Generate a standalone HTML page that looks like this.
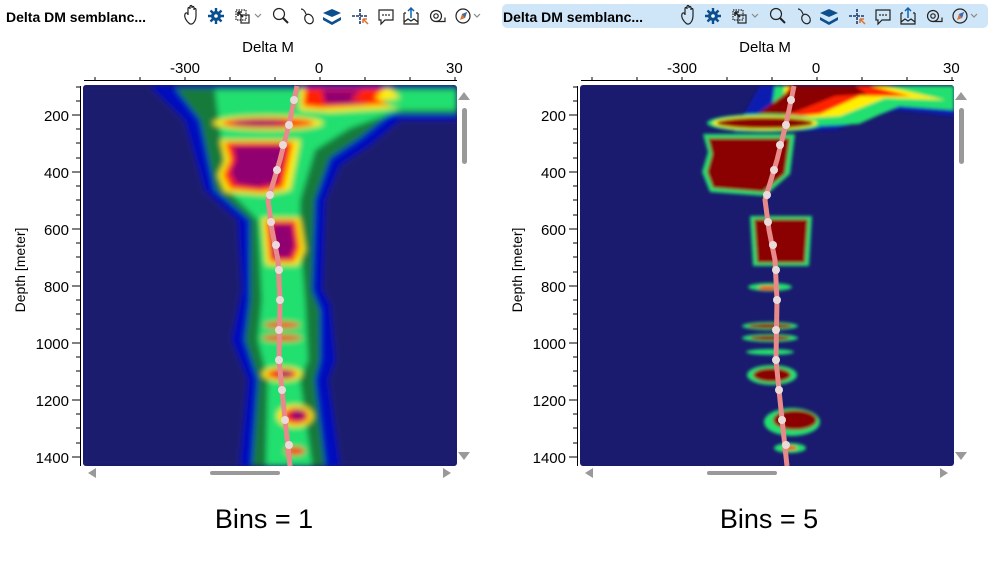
<!DOCTYPE html>
<html><head><meta charset="utf-8"><style>
body{margin:0;width:993px;height:563px;background:#fff;overflow:hidden;font-family:"Liberation Sans",sans-serif}
</style></head><body>
<svg width="993" height="563" viewBox="0 0 993 563" xmlns="http://www.w3.org/2000/svg" font-family="Liberation Sans, sans-serif">
<defs>
<filter id="bl" x="-50%" y="-50%" width="200%" height="200%"><feGaussianBlur stdDeviation="3"/></filter>
<filter id="bs" x="-50%" y="-50%" width="200%" height="200%"><feGaussianBlur stdDeviation="1.5"/></filter>
<clipPath id="c1"><rect x="83" y="85" width="374" height="381" rx="3"/></clipPath>
<clipPath id="c2"><rect x="580" y="85" width="374" height="381" rx="3"/></clipPath>
<g id="tb">
<text x="6" y="22" font-size="14" font-weight="bold" fill="#000">Delta DM semblanc...</text>
<g stroke="#222" fill="none" stroke-width="1.2">
<path d="M190 24c-4-3-6-7-5-10 1-2 3-1 3 1v-6c0-2 2-2 2 0v-2c0-2 2-2 2 0v1c0-2 2-2 2 0v2c0-2 2-2 2 0v6c0 4-2 7-4 8z"/>
<rect x="236" y="10" width="10" height="10" stroke-dasharray="1.5 1"/><rect x="241" y="15" width="8" height="8"/><path d="M238 12l5 5M238 12h4M238 12v4" stroke-width="1.6"/><path d="M255 14l3 3 3-3" stroke="#888"/>
<circle cx="279" cy="14" r="5.5"/><path d="M283 18l5 5" stroke-width="2"/>
<path d="M301 9c2 0 4 2 5 5"/><ellipse cx="309" cy="19" rx="4" ry="5" transform="rotate(-30 309 19)"/>
<path d="M352 16h16M360 9v16" stroke="#1a3a6a" stroke-width="1.6" stroke-dasharray="3 1"/>
<path d="M379 10h14v10h-8l-4 4v-4h-2z"/>
<path d="M404 13h2M416 13h2M404 13v11h14v-11M404 22l4-3 3 2 3-2 4 3"/><path d="M411 18v-10M408 11l3-3 3 3" stroke="#1060b0" stroke-width="1.5"/>
<circle cx="436" cy="16" r="5.5"/><circle cx="436" cy="16" r="2.2"/><path d="M436 21.5h9v-4"/>
<circle cx="463" cy="16" r="7"/><path d="M474 14l3 3 3-3" stroke="#888"/>
</g>
<path d="M460 20l2-6 5-2-2 6z" fill="#e07030"/><path d="M462 14l5-2-2 6z" fill="#3a6ab0"/>
<circle cx="216" cy="16" r="5" fill="#0b4f8f"/>
<path d="M216 8v16M208 16h16M210.5 10.5l11 11M221.5 10.5l-11 11" stroke="#0b4f8f" stroke-width="2.4"/>
<circle cx="216" cy="16" r="1.8" fill="#fff"/>
<path d="M323 13l9-4 9 4-9 4z" fill="#0b4f8f"/><path d="M323 17l9 5 9-5v3l-9 5-9-5z" fill="#0b4f8f"/>
<path d="M363 19l5 5M363 19h4M363 19v4" stroke="#e07030" stroke-width="1.5"/>
<g fill="#222"><circle cx="383" cy="15" r="0.9"/><circle cx="386" cy="15" r="0.9"/><circle cx="389" cy="15" r="0.9"/></g>
</g>
<g id="ax">
<text x="268" y="52" font-size="15" text-anchor="middle">Delta M</text>
<text x="185" y="73" font-size="15" text-anchor="middle">-300</text>
<text x="319" y="73" font-size="15" text-anchor="middle">0</text>
<text x="446" y="73" font-size="15">30</text>
<path d="M84 80.5H457M95 80v-3M140 80v-3M185 80v-3M230 80v-3M275 80v-3M320 80v-3M365 80v-3M410 80v-3M455 80v-3" stroke="#000" fill="none"/>
<path d="M80.5 86V466M72 115h8M72 172h8M72 229h8M72 286h8M72 343h8M72 400h8M72 457h8M76 87h4M76 101h4M76 129h4M76 143h4M76 158h4M76 186h4M76 200h4M76 215h4M76 243h4M76 257h4M76 272h4M76 300h4M76 314h4M76 329h4M76 357h4M76 371h4M76 386h4M76 414h4M76 428h4M76 443h4" stroke="#000" fill="none"/>
<g font-size="15" text-anchor="end">
<text x="69" y="121">200</text><text x="69" y="178">400</text><text x="69" y="235">600</text><text x="69" y="292">800</text><text x="69" y="349">1000</text><text x="69" y="406">1200</text><text x="69" y="463">1400</text></g>
<text transform="translate(25 270) rotate(-90)" font-size="14" text-anchor="middle">Depth [meter]</text>
<path d="M458 100l6-8 6 8z M458 452l6 8 6-8z M96 468l-8 5 8 5z M443 468l8 5-8 5z" fill="#999"/>
<rect x="462" y="108" width="5" height="56" rx="2.5" fill="#999"/>
<rect x="210" y="471" width="70" height="4" rx="2" fill="#999"/>
</g>
</defs>

<!-- left panel -->
<use href="#tb"/>
<use href="#ax"/>
<rect x="83" y="85" width="374" height="381" rx="3" fill="#1a1a6e"/>
<g clip-path="url(#c1)"><g filter="url(#bl)">
<rect x="83" y="85" width="374" height="381" fill="#1a1a6e"/>
<path d="M150 86H457V120H400L370 145 340 165 325 200 322 290 330 305 335 360 328 380 340 466H240L248 380 232 340 240 300 242 290 238 220 205 190 185 120z" fill="#0008c0"/>
<path d="M175 88H457V114H390L360 138 330 158 315 200 312 290 320 310 320 360 315 380 325 466H252L258 380 245 340 250 300 250 220 215 190 200 120z" fill="#127a3a"/>
<path d="M215 90H457V110H400L350 128 315 150 300 200 300 240 305 300 308 360 300 380 312 466H266L268 380 258 340 262 300 258 220 228 190 220 130z" fill="#20e070"/>
<path d="M300 88H390L400 98 370 102 400 108 330 112 300 110z" fill="#ffee00"/>
<path d="M305 88H385L375 98 390 104 320 108 303 106z" fill="#ff2000"/>
<path d="M322 90H362L350 100 370 104 325 104z" fill="#900070"/>
<ellipse cx="268" cy="123" rx="55" ry="7" fill="#ffee00"/>
<ellipse cx="268" cy="123" rx="46" ry="5" fill="#ff2000"/>
<ellipse cx="260" cy="123" rx="28" ry="3" fill="#900070"/>
<path d="M220 140H300L290 190 265 195 225 192 218 175 225 160z" fill="#ffee00"/>
<path d="M225 142H293L283 188 262 192 230 189 223 175 230 160z" fill="#ff2000"/>
<path d="M233 146H285L277 183 258 187 236 184 230 172 236 160z" fill="#900070"/>
<path d="M262 218H300L305 250 298 265H266z" fill="#ffee00"/>
<path d="M266 220H296L300 248 294 262H270z" fill="#ff2000"/>
<path d="M272 224H292L295 246 290 258H274z" fill="#900070"/>
<ellipse cx="282" cy="325" rx="18" ry="3" fill="#ff2000"/>
<ellipse cx="282" cy="338" rx="20" ry="3" fill="#ff2000"/>
<ellipse cx="282" cy="374" rx="20" ry="7" fill="#ffee00"/><ellipse cx="282" cy="374" rx="15" ry="5" fill="#ff2000"/><ellipse cx="285" cy="374" rx="8" ry="3" fill="#900070"/>
<ellipse cx="295" cy="416" rx="18" ry="11" fill="#ffee00"/><ellipse cx="296" cy="416" rx="13" ry="8" fill="#ff2000"/><ellipse cx="298" cy="415" rx="8" ry="5" fill="#900070"/>
<ellipse cx="295" cy="451" rx="10" ry="4" fill="#ff2000"/>
</g>
<path d="M297 86L290 120 280 160 268 200 272 230 278 260 280 300 279 360 283 400 290 466" stroke="#e88a8a" stroke-width="5" fill="none"/>
<g fill="#eadada"><circle cx="294" cy="100" r="4"/><circle cx="289" cy="125" r="4"/><circle cx="283" cy="145" r="4"/><circle cx="277" cy="170" r="4"/><circle cx="270" cy="195" r="4"/><circle cx="271" cy="222" r="4"/><circle cx="276" cy="245" r="4"/><circle cx="279" cy="270" r="4"/><circle cx="280" cy="300" r="4"/><circle cx="279" cy="330" r="4"/><circle cx="279" cy="360" r="4"/><circle cx="282" cy="390" r="4"/><circle cx="285" cy="420" r="4"/><circle cx="289" cy="445" r="4"/></g>
</g>

<!-- right panel -->
<rect x="502" y="4" width="486" height="24" rx="5" fill="#cfe6f8"/>
<use href="#tb" x="497"/>
<use href="#ax" x="497"/>
<rect x="580" y="85" width="374" height="381" rx="3" fill="#1a1a6e"/>
<g clip-path="url(#c2)"><g filter="url(#bs)">
<path d="M760 86h194v30l-60 -6-60 20-100 2z" fill="#0a1fb0"/>
<path d="M775 86h179v24l-55-4-40 18-90 4z" fill="#22e070"/>
<path d="M785 86h100l60 14-60-2-45 18-60 4z" fill="#ffee00"/>
<path d="M790 86h80l40 10-50 0-40 18-50 5z" fill="#ff2000"/>
<path d="M795 86h60l12 8-32 2-40 16-45 8z" fill="#8b0000"/>
<ellipse cx="765" cy="123" rx="58" ry="9" fill="#22e070"/><ellipse cx="765" cy="123" rx="52" ry="7" fill="#ffee00"/><ellipse cx="765" cy="123" rx="48" ry="5.5" fill="#8b0000"/>
<path d="M703 134h92l-5 40-25 22-55-4-8-20 6-20z" fill="#22e070"/>
<path d="M708 138h82l-5 36-22 18-50-4-6-16 5-18z" fill="#8b0000"/>
<path d="M750 216h62l-3 50-56 0z" fill="#22e070"/>
<path d="M754 219h54l-3 44-48 0z" fill="#8b0000"/>
<ellipse cx="770" cy="287" rx="22" ry="4" fill="#22e070"/><ellipse cx="768" cy="288" rx="10" ry="2" fill="#ff2000"/>
<ellipse cx="770" cy="326" rx="28" ry="4" fill="#22e070"/><ellipse cx="770" cy="326" rx="22" ry="2.5" fill="#8b0000"/>
<ellipse cx="770" cy="338" rx="28" ry="4" fill="#22e070"/><ellipse cx="770" cy="338" rx="20" ry="2.5" fill="#8b0000"/>
<ellipse cx="770" cy="352" rx="24" ry="3" fill="#22e070"/>
<ellipse cx="772" cy="375" rx="25" ry="10" fill="#22e070"/><ellipse cx="772" cy="375" rx="19" ry="7" fill="#8b0000"/>
<ellipse cx="792" cy="422" rx="28" ry="14" fill="#22e070"/><ellipse cx="795" cy="420" rx="22" ry="10" fill="#8b0000"/>
<ellipse cx="790" cy="448" rx="16" ry="5" fill="#22e070"/><ellipse cx="790" cy="448" rx="7" ry="2" fill="#ff2000"/>
</g>
<path d="M794 86L787 120 777 160 765 200 769 230 775 260 777 300 776 360 780 400 787 466" stroke="#e88a8a" stroke-width="5" fill="none"/>
<g fill="#eadada"><circle cx="791" cy="100" r="4"/><circle cx="786" cy="125" r="4"/><circle cx="780" cy="145" r="4"/><circle cx="774" cy="170" r="4"/><circle cx="767" cy="195" r="4"/><circle cx="768" cy="222" r="4"/><circle cx="773" cy="245" r="4"/><circle cx="776" cy="270" r="4"/><circle cx="777" cy="300" r="4"/><circle cx="776" cy="330" r="4"/><circle cx="776" cy="360" r="4"/><circle cx="779" cy="390" r="4"/><circle cx="782" cy="420" r="4"/><circle cx="786" cy="445" r="4"/></g>
</g>

<text x="264" y="528" font-size="27" text-anchor="middle">Bins = 1</text>
<text x="769" y="528" font-size="27" text-anchor="middle">Bins = 5</text>
</svg>
</body></html>
